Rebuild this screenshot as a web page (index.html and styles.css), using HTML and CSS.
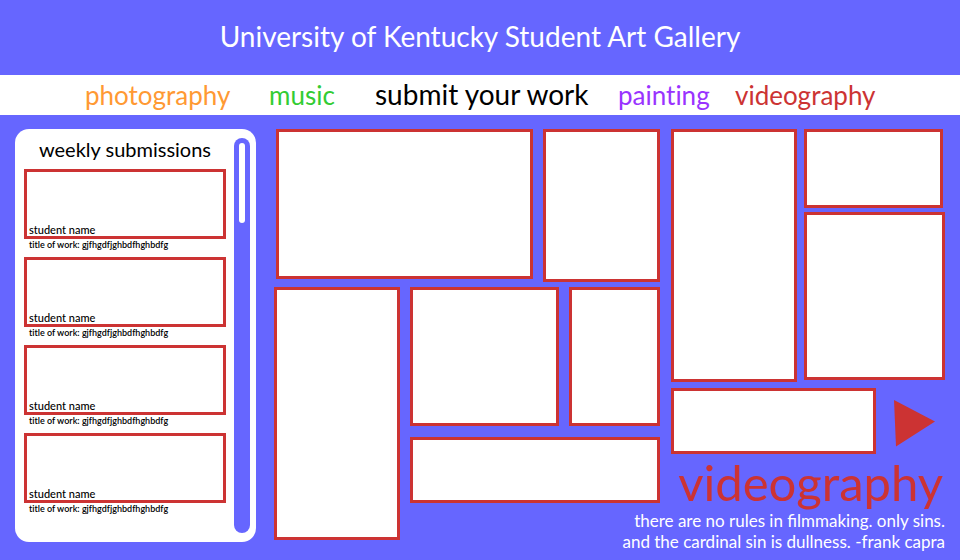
FILE: index.html
```html
<!DOCTYPE html>
<html lang="en">
<head>
<meta charset="utf-8">
<meta name="viewport" content="width=device-width, initial-scale=1">
<title>University of Kentucky Student Art Gallery</title>
<link rel="stylesheet" href="styles.css">
</head>
<body>
<header class="site-header">
  <h1 class="site-title">University of Kentucky Student Art Gallery</h1>
</header>
<nav class="site-nav">
  <a class="nav-link nav-photography" href="#photography">photography</a>
  <a class="nav-link nav-music" href="#music">music</a>
  <a class="nav-link nav-submit" href="#submit">submit your work</a>
  <a class="nav-link nav-painting" href="#painting">painting</a>
  <a class="nav-link nav-videography" href="#videography">videography</a>
</nav>
<div class="page">
  <aside class="weekly">
    <div class="weekly-content">
      <h2 class="weekly-title">weekly submissions</h2>
      <div class="submissions">
        <article class="submission">
          <div class="submission-frame">student name</div>
          <p class="submission-work">title of work: gjfhgdfjghbdfhghbdfg</p>
        </article>
        <article class="submission">
          <div class="submission-frame">student name</div>
          <p class="submission-work">title of work: gjfhgdfjghbdfhghbdfg</p>
        </article>
        <article class="submission">
          <div class="submission-frame">student name</div>
          <p class="submission-work">title of work: gjfhgdfjghbdfhghbdfg</p>
        </article>
        <article class="submission">
          <div class="submission-frame">student name</div>
          <p class="submission-work">title of work: gjfhgdfjghbdfhghbdfg</p>
        </article>
      </div>
    </div>
    <div class="scroll-track"><div class="scroll-thumb"></div></div>
  </aside>
  <main class="gallery">
    <section class="gallery-left">
      <div class="row row-top">
        <div class="tile tile-landscape"></div>
        <div class="tile tile-portrait"></div>
      </div>
      <div class="row row-bottom">
        <div class="tile tile-tall"></div>
        <div class="stack stack-left">
          <div class="row row-pair">
            <div class="tile tile-medium"></div>
            <div class="tile tile-medium"></div>
          </div>
          <div class="tile tile-banner"></div>
        </div>
      </div>
    </section>
    <section class="gallery-right" id="videography">
      <div class="row row-right">
        <div class="tile tile-tall"></div>
        <div class="stack stack-right">
          <div class="tile tile-small"></div>
          <div class="tile tile-large"></div>
        </div>
      </div>
      <div class="row row-play">
        <div class="tile tile-banner"></div>
        <button class="play" type="button" aria-label="Play">
          <svg class="play-icon" viewBox="0 0 41 47" aria-hidden="true"><path d="M0 0 41 21.500 2 46.500Z"/></svg>
        </button>
      </div>
      <h2 class="feature-title">videography</h2>
      <p class="feature-quote">there are no rules in filmmaking. only sins.<br>and the cardinal sin is dullness. -frank capra</p>
    </section>
  </main>
</div>
</body>
</html>
```
FILE: styles.css
```css
:root {
  --blue: #6666ff;
  --red: #cc3333;
}

* {
  box-sizing: border-box;
}

body {
  margin: 0;
  background: var(--blue);
  color: #000;
  font-family: Lato, sans-serif;
  font-variant-ligatures: none;
}

h1, h2, p {
  margin: 0;
  font-weight: 400;
}

.site-header {
  padding: 18px 16px 21px;
  text-align: center;
}

.site-title {
  color: #fff;
  font-size: 28px;
  line-height: 36px;
}

.site-nav {
  display: grid;
  grid-template-columns: 184fr 106fr 243fr 117fr 225fr;
  align-items: baseline;
  padding: 0 0 1px 85px;
  background: #fff;
}

.nav-link {
  font-size: 26px;
  line-height: 38px;
  text-decoration: none;
  white-space: nowrap;
}

.nav-photography { color: #ff9933; }
.nav-music { color: #33cc33; }
.nav-submit { color: #000; font-size: 28px; }
.nav-painting { color: #9933ff; }
.nav-videography { color: var(--red); }

.page {
  display: grid;
  grid-template-columns: 241fr 671fr;
  align-items: start;
  gap: 18px;
  padding: 14px 15px 0;
}

.weekly {
  display: flex;
  gap: 8px;
  padding: 9px 6px 9px 9px;
  border-radius: 14px;
  background: #fff;
}

.weekly-content {
  flex: 1;
  padding-bottom: 18px;
}

.weekly-title {
  font-size: 20px;
  line-height: 22px;
  text-align: center;
}

.submissions {
  display: grid;
  gap: 6px;
  padding-top: 9px;
}

.submission-frame {
  display: flex;
  align-items: flex-end;
  height: 70px;
  padding-left: 2px;
  border: 3px solid var(--red);
  font-size: 11px;
  font-weight: 500;
  line-height: 12px;
}

.submission-work {
  padding-left: 5px;
  font-size: 9px;
  font-weight: 600;
  line-height: 12px;
}

.scroll-track {
  width: 16px;
  padding: 5px;
  border-radius: 8px;
  background: var(--blue);
}

.scroll-thumb {
  height: 80px;
  border-radius: 3px;
  background: #fff;
}

.gallery {
  display: grid;
  grid-template-columns: 386fr 274fr;
  gap: 11px;
}

.row {
  display: grid;
  align-items: start;
  gap: 10px;
}

.row-top {
  grid-template-columns: 257fr 117fr;
  padding: 0 0 5px 2px;
}

.row-bottom {
  grid-template-columns: 126fr 250fr;
}

.row-pair {
  grid-template-columns: 149fr 91fr;
}

.row-right {
  grid-template-columns: 126fr 141fr;
  gap: 7px;
}

.stack {
  display: grid;
}

.stack-left {
  gap: 11px;
}

.stack-right {
  gap: 4px;
}

.tile {
  border: 3px solid var(--red);
  background: #fff;
}

.tile-landscape { height: 150px; }
.tile-portrait { height: 153px; }
.tile-tall { height: 253px; }
.tile-medium { height: 139px; }
.tile-banner { height: 66px; }
.tile-small { height: 79px; margin-right: 2px; }
.tile-large { height: 168px; }

.row-play {
  grid-template-columns: 1fr auto;
  align-items: end;
  gap: 18px;
  padding: 6px 10px 0 0;
}

.play {
  padding: 0 0 7px;
  border: 0;
  background: none;
  cursor: pointer;
}

.play-icon {
  display: block;
  width: 41px;
  height: 47px;
  fill: var(--red);
}

.feature-title {
  padding-right: 2px;
  color: var(--red);
  font-size: 49px;
  line-height: 56px;
  text-align: right;
}

.feature-quote {
  margin-left: -60px;
  color: #fff;
  font-size: 17px;
  font-variant-ligatures: normal;
  line-height: 21px;
  text-align: right;
  white-space: nowrap;
}
```
